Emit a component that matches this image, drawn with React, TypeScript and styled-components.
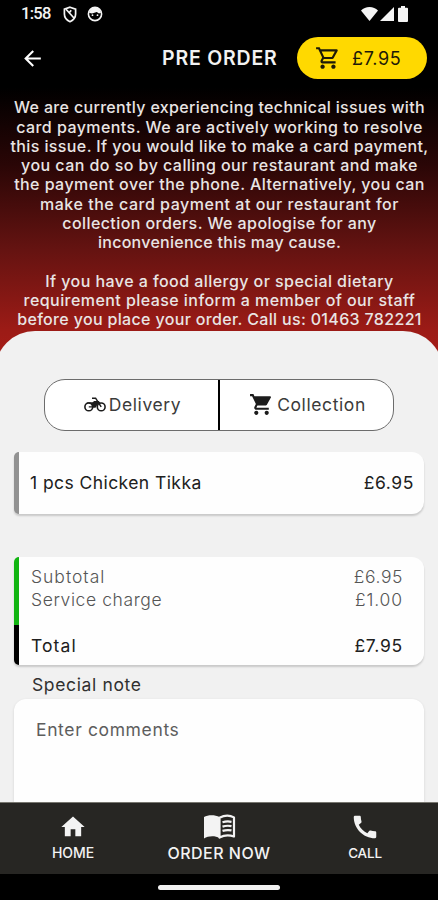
import React from 'react';
import styled, { createGlobalStyle, css } from 'styled-components';
import {
  MdArrowBack,
  MdCall,
  MdHome,
  MdOutlineShoppingCart,
  MdShoppingCart,
} from 'react-icons/md';

const GlobalStyle = createGlobalStyle`
  * { box-sizing: border-box; }
  body {
    margin: 0;
    background: #000;
    font-family: Inter, "Open Sans", sans-serif;
  }
`;

const Screen = styled.div`
  display: flex;
  flex-direction: column;
  width: 438px;
  height: 900px;
  overflow: hidden;
  background: linear-gradient(
    180deg,
    #000 0,
    #000 88px,
    #2a0606 165px,
    #651311 250px,
    #9c1b16 330px,
    #a61c17 356px
  );
`;

const StatusBar = styled.div`
  display: flex;
  align-items: center;
  justify-content: space-between;
  height: 28px;
  padding: 0 30px 0 21px;
`;

const StatusGroup = styled.div<{ $gap: number }>`
  display: flex;
  align-items: center;
  gap: ${(p) => p.$gap}px;
  color: #f4f4f4;
  svg { display: block; }
`;

const Clock = styled.span`
  font: 500 16.5px/30px Roboto, sans-serif;
  letter-spacing: -0.7px;
  margin-right: 2px;
`;

const Header = styled.header`
  display: grid;
  grid-template-columns: 142px 1fr 130px;
  align-items: center;
  height: 62px;
  padding: 0 11px 2px 20px;
  color: #f2f2f2;
`;

const BackButton = styled.button`
  display: flex;
  padding: 0;
  border: 0;
  background: none;
  color: #fff;
`;

const Title = styled.h1`
  margin: 0;
  font-size: 19.5px;
  font-weight: 600;
  letter-spacing: 0.8px;
  white-space: nowrap;
`;

const CartPill = styled.button`
  display: flex;
  align-items: center;
  height: 42px;
  padding: 0 0 0 18px;
  gap: 11px;
  border: 0;
  border-radius: 21px;
  background: #ffd900;
  color: #1d1a08;
  font: 400 18px Inter, sans-serif;
  letter-spacing: 0.65px;
`;

const Notice = styled.section`
  height: 241px;
  padding-top: 8.4px;
  color: #e9e5e4;
  font-size: 16px;
  font-weight: 500;
  line-height: 19.27px;
  text-align: center;
  white-space: nowrap;
`;

const NoticeLine = styled.div<{ $tracking?: number }>`
  height: 19.27px;
  padding-left: 1px;
  letter-spacing: ${(p) => p.$tracking ?? 0}px;
`;

const Sheet = styled.main`
  display: flex;
  flex-direction: column;
  height: 471px;
  margin: 0 -5px;
  padding: 48px 19px 0;
  overflow: hidden;
  border-radius: 40px 40px 0 0;
  background: #f1f1f1;
`;

const Toggle = styled.div`
  display: grid;
  grid-template-columns: 175px 1fr;
  flex: none;
  height: 52px;
  margin: 0 30px;
  border: 1px solid #6c6c6c;
  border-radius: 21px;
  background: #fff;
`;

const Option = styled.button<{ $divided?: boolean; $tracking: number }>`
  display: flex;
  align-items: center;
  justify-content: center;
  gap: 3px;
  padding: 0 0 1px 2px;
  border: 0;
  background: none;
  color: #3b3b3b;
  font: 400 17.5px Inter, sans-serif;
  letter-spacing: ${(p) => p.$tracking}px;
  ${(p) => p.$divided && css`border-right: 2px solid #000;`}
  svg { color: #1c1c1c; }
`;

const Card = styled.section<{ $top: number; $height: number; $bar?: string }>`
  flex: none;
  height: ${(p) => p.$height}px;
  margin-top: ${(p) => p.$top}px;
  border-radius: 5px 12px 12px 5px;
  background: ${(p) =>
    p.$bar ? `linear-gradient(90deg, transparent 5.5px, #fefefe 5.5px), ${p.$bar}` : '#fefefe'};
  box-shadow: 0 2px 2px rgba(0, 0, 0, 0.17);
`;

const ItemRow = styled.div`
  display: flex;
  align-items: center;
  justify-content: space-between;
  height: 100%;
  padding: 0 10px 1px 16px;
  color: #202020;
  font-size: 17.5px;
`;

const Summary = styled.dl`
  margin: 0;
  padding: 7.5px 21px 0 17px;
`;

const SummaryRow = styled.div<{ $strong?: boolean }>`
  display: flex;
  justify-content: space-between;
  height: 23px;
  margin-top: ${(p) => (p.$strong ? 23 : 0)}px;
  color: ${(p) => (p.$strong ? '#202020' : '#555')};
  font-size: 17.5px;
  font-weight: ${(p) => (p.$strong ? 400 : 300)};
  line-height: 23px;
  dd { margin: 0; }
`;

const Tracked = styled.span<{ $value: number }>`
  letter-spacing: ${(p) => p.$value}px;
`;

const NoteLabel = styled.label`
  flex: none;
  height: 34px;
  padding: 8px 0 0 18px;
  color: #303030;
  font-size: 17.5px;
  line-height: 23px;
  letter-spacing: 0.63px;
`;

const NoteField = styled.div`
  flex: none;
  height: 150px;
  padding: 19px 22px;
  border-radius: 12px;
  background: #fefefe;
  box-shadow: 0 1px 3px rgba(0, 0, 0, 0.12);
  color: #5d5d5d;
  font-size: 17.5px;
  line-height: 23px;
  letter-spacing: 0.63px;
`;

const NavBar = styled.nav`
  display: grid;
  grid-template-columns: repeat(3, 146px);
  flex: none;
  height: 72px;
  border-top: 1px solid #77766f;
  background: #272623;
  color: #f3f3f3;
`;

const NavItem = styled.a<{ $size: number; $tracking: number }>`
  display: flex;
  flex-direction: column;
  align-items: center;
  font-size: ${(p) => p.$size}px;
  font-weight: 500;
  line-height: 20px;
  letter-spacing: ${(p) => p.$tracking}px;
`;

const NavIcon = styled.span`
  display: flex;
  align-items: center;
  height: 31px;
  margin: 8px 0 1px;
`;

const GestureArea = styled.footer`
  display: flex;
  justify-content: center;
  height: 26px;
  padding-top: 10.5px;
  background: #000;
`;

const GesturePill = styled.div`
  width: 122px;
  height: 5px;
  border-radius: 3px;
  background: #f1f1f1;
`;

const allergyNotice: [string, number][] = [
  ['We are currently experiencing technical issues with', 0.33],
  ['card payments. We are actively working to resolve', 0.44],
  ['this issue. If you would like to make a card payment,', 0.39],
  ['you can do so by calling our restaurant and make', 0.45],
  ['the payment over the phone. Alternatively, you can', 0.43],
  ['make the card payment at our restaurant for', 0.52],
  ['collection orders. We apologise for any', 0.42],
  ['inconvenience this may cause.', 0.27],
  ['', 0],
  ['If you have a food allergy or special dietary', 0.44],
  ['requirement please inform a member of our staff', 0.44],
  ['before you place your order. Call us: 01463 782221', 0.34],
];

const charges = [
  { label: 'Subtotal', labelTracking: 1.0, price: '£6.95', tracking: 0.6 },
  { label: 'Service charge', labelTracking: 0.6, price: '£1.00', tracking: 0.9 },
  { label: 'Total', labelTracking: 1.1, price: '£7.95', tracking: 0.75, strong: true },
];

const ShieldIcon = () => (
  <svg width="14" height="17" viewBox="0 0 14 17" fill="none" stroke="currentColor" strokeWidth="1.7">
    <path d="M7 1.2 12.6 3.2v4.9c0 3.5-2.3 6.2-5.6 7.6-3.3-1.4-5.6-4.1-5.6-7.6V3.2z" />
    <path d="M3 3.2 11.2 12.2M6.3 6.8 8.2 4.2" />
  </svg>
);

const FaceIcon = () => (
  <svg width="16" height="16" viewBox="0 0 16 16">
    <circle cx="8" cy="8" r="6.6" fill="none" stroke="currentColor" strokeWidth="1.6" />
    <path d="M2 6.8C3 3.5 5 1.5 8 1.5s5 2 6 5.3L12 7.6 9.8 6 5 7.5z" fill="currentColor" />
    <circle cx="5.5" cy="9.2" r=".9" fill="currentColor" />
    <circle cx="10.5" cy="9.2" r=".9" fill="currentColor" />
  </svg>
);

const WifiIcon = () => (
  <svg width="17" height="14" viewBox="0 0 17 14" fill="currentColor">
    <path d="M8.5 14 0 3.6C2.2 1.3 5.2 0 8.5 0S14.8 1.3 17 3.6z" />
  </svg>
);

const SignalIcon = () => (
  <svg width="14" height="14" viewBox="0 0 14 14" fill="currentColor">
    <path d="M14 0v14H0z" />
  </svg>
);

const BatteryIcon = () => (
  <svg width="10" height="16" viewBox="0 0 10 16" fill="currentColor">
    <path d="M3 0h4v1.7h2a1 1 0 0 1 1 1V15a1 1 0 0 1-1 1H1a1 1 0 0 1-1-1V2.7a1 1 0 0 1 1-1h2z" />
  </svg>
);

const MotorbikeIcon = () => (
  <svg width="22" height="15" viewBox="0 0 22 15" fill="none" stroke="currentColor">
    <circle cx="4.8" cy="9.9" r="3.9" strokeWidth="1.6" />
    <circle cx="17.2" cy="9.9" r="3.9" strokeWidth="1.6" />
    <path d="M8 1.2h3.600l5.600 8.700" strokeWidth="1.5" />
    <path d="M2.200 5.200h6.300l1.800-1.300h4.500l1.700 2.200-3.400 1.800-1.300 2.600H8.500L7.300 7.500z" fill="currentColor" stroke="none" />
    <path d="M4.800 9.900h6.400" strokeWidth="1.4" />
  </svg>
);

const BookIcon = () => (
  <svg width="33" height="26" viewBox="0 0 33 26" fill="none" stroke="currentColor">
    <path d="M1 3C5 .5 12 .5 16.500 3v21C12 21.500 5 21.800 1 24.500z" fill="currentColor" stroke="none" />
    <path d="M16.500 3.800C21 1.400 27 1.300 31 3.400v19.200c-4-1.600-10-1.500-14.500.9z" strokeWidth="2.200" strokeLinejoin="round" />
    <path d="M19.500 8.300c3-1 6-1.100 9-.5M19.500 12.600c3-1 6-1.100 9-.5M19.500 16.900c3-1 6-1.100 9-.5" strokeWidth="2.200" />
  </svg>
);

export default function App() {
  return (
    <>
      <GlobalStyle />
      <Screen>
        <StatusBar>
          <StatusGroup $gap={10}>
            <Clock>1:58</Clock>
            <ShieldIcon />
            <FaceIcon />
          </StatusGroup>
          <StatusGroup $gap={2}>
            <WifiIcon />
            <SignalIcon />
            <span />
            <BatteryIcon />
          </StatusGroup>
        </StatusBar>
        <Header>
          <BackButton aria-label="Back">
            <MdArrowBack size={25} />
          </BackButton>
          <Title>PRE ORDER</Title>
          <CartPill>
            <MdOutlineShoppingCart size={26} />
            £7.95
          </CartPill>
        </Header>
        <Notice>
          {allergyNotice.map(([text, tracking], i) => (
            <NoticeLine key={i} $tracking={tracking}>
              {text}
            </NoticeLine>
          ))}
        </Notice>
        <Sheet>
          <Toggle>
            <Option $divided $tracking={0.59}>
              <MotorbikeIcon />
              Delivery
            </Option>
            <Option $tracking={0.6}>
              <MdShoppingCart size={25} />
              Collection
            </Option>
          </Toggle>
          <Card $top={21} $height={62} $bar="#929292">
            <ItemRow>
              <Tracked $value={0.43}>1 pcs Chicken Tikka</Tracked>
              <Tracked $value={0.57}>£6.95</Tracked>
            </ItemRow>
          </Card>
          <Card
            $top={43}
            $height={108}
            $bar="linear-gradient(180deg, #12b512 68px, #000 68px)"
          >
            <Summary>
              {charges.map((c) => (
                <SummaryRow key={c.label} $strong={c.strong}>
                  <dt>
                    <Tracked $value={c.labelTracking}>{c.label}</Tracked>
                  </dt>
                  <dd>
                    <Tracked $value={c.tracking}>{c.price}</Tracked>
                  </dd>
                </SummaryRow>
              ))}
            </Summary>
          </Card>
          <NoteLabel>Special note</NoteLabel>
          <NoteField>Enter comments</NoteField>
        </Sheet>
        <NavBar>
          <NavItem $size={14} $tracking={-0.1}>
            <NavIcon>
              <MdHome size={28} />
            </NavIcon>
            HOME
          </NavItem>
          <NavItem $size={16} $tracking={0.5}>
            <NavIcon>
              <BookIcon />
            </NavIcon>
            ORDER NOW
          </NavItem>
          <NavItem $size={13.5} $tracking={-0.2}>
            <NavIcon>
              <MdCall size={30} />
            </NavIcon>
            CALL
          </NavItem>
        </NavBar>
        <GestureArea>
          <GesturePill />
        </GestureArea>
      </Screen>
    </>
  );
}
